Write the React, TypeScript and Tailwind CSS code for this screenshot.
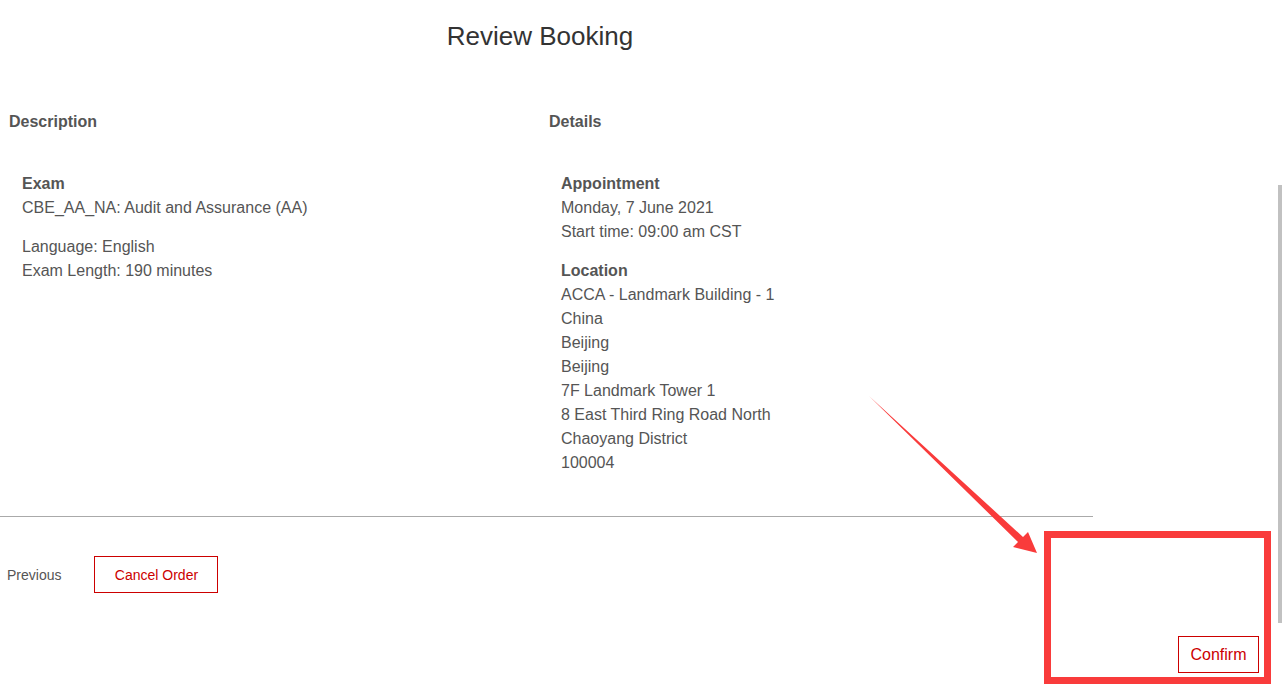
const font = { fontFamily: '"Liberation Sans", Arial, sans-serif' }

const location = [
  'ACCA - Landmark Building - 1',
  'China',
  'Beijing',
  'Beijing',
  '7F Landmark Tower 1',
  '8 East Third Ring Road North',
  'Chaoyang District',
  '100004',
]

function Field({ label, lines }: { label: string; lines: string[] }) {
  return (
    <div>
      <div className="font-bold text-[#555]">{label}</div>
      {lines.map((l, i) => (
        <div key={i}>{l}</div>
      ))}
    </div>
  )
}

export default function App() {
  return (
    <div
      className="relative h-[688px] w-[1282px] overflow-hidden bg-white text-[16px] leading-6 text-[#555]"
      style={font}
    >
      <h1 className="w-[1080px] pt-[20px] text-center text-[26px] leading-[32px] text-[#333]">
        Review Booking
      </h1>

      <div className="mt-[58px] flex w-[1080px]">
        <div className="w-[540px] px-[9px] font-bold">Description</div>
        <div className="w-[540px] px-[9px] font-bold">Details</div>
      </div>

      <div className="mt-[38px] flex w-[1080px]">
        <div className="flex w-[540px] flex-col gap-[15px] pl-[22px]">
          <Field label="Exam" lines={['CBE_AA_NA: Audit and Assurance (AA)']} />
          <div>
            <div>Language: English</div>
            <div>Exam Length: 190 minutes</div>
          </div>
        </div>
        <div className="flex w-[540px] flex-col gap-[15px] pl-[21px]">
          <Field label="Appointment" lines={['Monday, 7 June 2021', 'Start time: 09:00 am CST']} />
          <Field label="Location" lines={location} />
        </div>
      </div>

      <div className="mt-[41px] h-px w-[1093px] bg-[#aaa]" />

      <div className="mt-[39px] flex items-center gap-[33px] pl-[7px] text-[14px]">
        <button className="text-[#555]">Previous</button>
        <button className="h-[37px] w-[124px] border border-[#cc0000] text-[#cc0000]">
          Cancel Order
        </button>
      </div>

      <div className="mt-[43px] flex w-[1259px] justify-end">
        <button className="h-[37px] w-[81px] border border-[#cc0000] text-[16px] text-[#cc0000]">
          Confirm
        </button>
      </div>

      {/* page scrollbar thumb */}
      <div className="absolute right-0 top-[185px] h-[438px] w-[4px] bg-[#c1c1c1]" />

      {/* annotation overlay */}
      <div className="pointer-events-none absolute left-[1044px] top-[531px] h-[153px] w-[227px] border-[7px] border-[#f93b3b]" />
      <svg className="pointer-events-none absolute left-0 top-0" width="1282" height="688">
        <polygon
          points="869,396 1023,537 1028,532 1037,553 1013,547 1018,542"
          fill="#f93b3b"
        />
      </svg>
    </div>
  )
}
